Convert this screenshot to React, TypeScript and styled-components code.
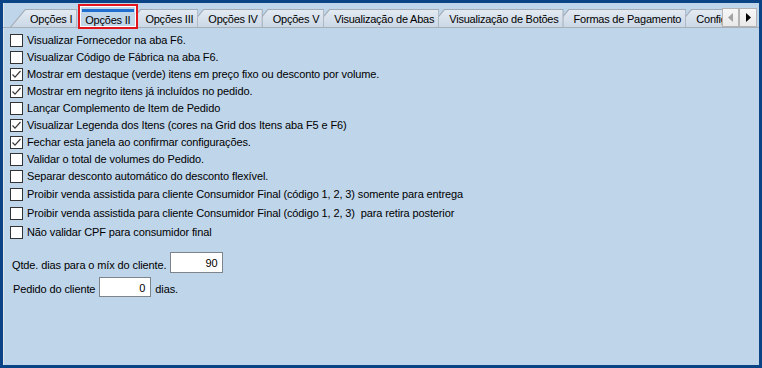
import React from "react";
import styled, { createGlobalStyle } from "styled-components";

const GlobalStyle = createGlobalStyle`
  html, body { margin: 0; padding: 0; background: #ffffff; }
  body { font-family: "Liberation Sans", Arial, sans-serif; }
`;

const Frame = styled.div`
  width: 762px;
  height: 368px;
  box-sizing: border-box;
  border: 3px solid #0a4487;
  background: #bfd5ea;
  box-shadow: inset 1px 0 0 #e2e5ea;
  display: flex;
  flex-direction: column;
  overflow: hidden;
  font-family: "Liberation Sans", Arial, sans-serif;
  font-size: 11px;
  letter-spacing: -0.12px;
  color: #000;
`;

const Header = styled.div`
  flex: none;
  height: 26px;
  display: flex;
  background: linear-gradient(
    to bottom,
    transparent 24px,
    #a7afb8 24px,
    #a7afb8 25px,
    transparent 25px
  );
`;

const TabList = styled.div`
  flex: 1;
  min-width: 0;
  overflow: hidden;
  display: flex;
  align-items: flex-start;
  padding: 6px 0 0 7px;
  letter-spacing: -0.22px;
`;

const Tab = styled.div<{ $z: number }>`
  position: relative;
  z-index: ${(p) => p.$z};
  flex: none;
  height: 18px;
  box-sizing: border-box;
  margin-left: -10px;
  padding: 2px 5px 0 20px;
  display: flex;
  align-items: center;
  white-space: nowrap;
  background: #a3acb6;
  clip-path: polygon(0 100%, 15px 0, 100% 0, 100% 100%);

  &:first-child {
    margin-left: 0;
  }

  &::before {
    content: "";
    position: absolute;
    inset: 0;
    z-index: -1;
    background: linear-gradient(#e4ebf3, #cbd8e6);
    clip-path: polygon(1.4px 100%, 15.6px 1px, calc(100% - 1px) 1px, calc(100% - 1px) 100%);
  }
`;

const ActiveTab = styled.div`
  position: relative;
  z-index: 50;
  flex: none;
  height: 25px;
  box-sizing: border-box;
  margin: -5px -3px 0 1px;
  padding: 6px 6px 0 5px;
  border: 2px solid #e3151c;
  box-shadow: inset 0 0 0 1px #ffffff;
  background:
    linear-gradient(#1f6fd0, #1f6fd0) 2px 3px / calc(100% - 4px) 3px no-repeat,
    #c2d6ea;
  display: flex;
  align-items: center;
  white-space: nowrap;
`;

const Scroller = styled.div`
  flex: none;
  display: flex;
  margin: 5px 2px 0 0;
`;

const ScrollButton = styled.div<{ $w: number }>`
  width: ${(p) => p.$w}px;
  height: 19px;
  box-sizing: border-box;
  border: 1px solid #b4b4b4;
  background: linear-gradient(#f7f7f7, #e9e9e9);
  display: flex;
  align-items: center;
  justify-content: center;
`;

const Body = styled.div`
  display: flex;
  flex-direction: column;
  padding: 2.5px 0 0 7px;
`;

const Row = styled.div<{ $tall?: boolean }>`
  display: flex;
  align-items: center;
  gap: 4px;
  height: ${(p) => (p.$tall ? 19 : 17)}px;
  white-space: pre;
`;

const Box = styled.span`
  flex: none;
  width: 13px;
  height: 13px;
  box-sizing: border-box;
  border: 1px solid #333333;
  background: #ffffff;
  display: flex;
  align-items: center;
  justify-content: center;
`;

const Fields = styled.div`
  display: flex;
  flex-direction: column;
  gap: 4px;
  margin-top: 10.5px;
  padding-left: 2px;
`;

const FieldRow = styled.div<{ $indent?: number }>`
  display: flex;
  align-items: center;
  gap: 4px;
  padding-left: ${(p) => p.$indent ?? 0}px;
`;

const FieldLabel = styled.span`
  padding-top: 4px;
  white-space: nowrap;
`;

const NumberInput = styled.div<{ $w: number; $h: number }>`
  width: ${(p) => p.$w}px;
  height: ${(p) => p.$h}px;
  box-sizing: border-box;
  border: 1px solid #7e848c;
  background: #ffffff;
  display: flex;
  align-items: center;
  justify-content: flex-end;
  padding: 1px 5px 0 0;
`;

const Check = () => (
  <svg width="11" height="11" viewBox="0 0 11 11">
    <polyline points="1.5,5.5 4,8.2 9.5,2" fill="none" stroke="#3a3a3a" strokeWidth="1.2" />
  </svg>
);

const tabs = [
  "Opções I",
  "Opções II",
  "Opções III",
  "Opções IV",
  "Opções V",
  "Visualização de Abas",
  "Visualização de Botões",
  "Formas de Pagamento",
  "Configurações",
];

const options: { label: string; checked: boolean; tall?: boolean }[] = [
  { label: "Visualizar Fornecedor na aba F6.", checked: false },
  { label: "Visualizar Código de Fábrica na aba F6.", checked: false },
  { label: "Mostrar em destaque (verde) itens em preço fixo ou desconto por volume.", checked: true },
  { label: "Mostrar em negrito itens já incluídos no pedido.", checked: true },
  { label: "Lançar Complemento de Item de Pedido", checked: false },
  { label: "Visualizar Legenda dos Itens (cores na Grid dos Itens aba F5 e F6)", checked: true },
  { label: "Fechar esta janela ao confirmar configurações.", checked: true },
  { label: "Validar o total de volumes do Pedido.", checked: false },
  { label: "Separar desconto automático do desconto flexível.", checked: false },
  { label: "Proibir venda assistida para cliente Consumidor Final (código 1, 2, 3) somente para entrega", checked: false, tall: true },
  { label: "Proibir venda assistida para cliente Consumidor Final (código 1, 2, 3)  para retira posterior", checked: false, tall: true },
  { label: "Não validar CPF para consumidor final", checked: false, tall: true },
];

export default function App() {
  return (
    <>
      <GlobalStyle />
      <Frame>
        <Header>
          <TabList>
            {tabs.map((t, i) =>
              i === 1 ? (
                <ActiveTab key={t}>{t}</ActiveTab>
              ) : (
                <Tab key={t} $z={30 - i}>
                  {t}
                </Tab>
              )
            )}
          </TabList>
          <Scroller>
            <ScrollButton $w={17}>
              <svg width="5" height="9" viewBox="0 0 5 9">
                <polygon points="5,0 0,4.5 5,9" fill="#a3a3a3" />
              </svg>
            </ScrollButton>
            <ScrollButton $w={18}>
              <svg width="5" height="9" viewBox="0 0 5 9">
                <polygon points="0,0 5,4.5 0,9" fill="#000000" />
              </svg>
            </ScrollButton>
          </Scroller>
        </Header>
        <Body>
          {options.map((o) => (
            <Row key={o.label} $tall={o.tall}>
              <Box>{o.checked && <Check />}</Box>
              <span>{o.label}</span>
            </Row>
          ))}
          <Fields>
            <FieldRow>
              <FieldLabel>Qtde. dias para o míx do cliente.</FieldLabel>
              <NumberInput $w={53} $h={21}>90</NumberInput>
            </FieldRow>
            <FieldRow $indent={1}>
              <FieldLabel>Pedido do cliente</FieldLabel>
              <NumberInput $w={52} $h={20}>0</NumberInput>
              <FieldLabel>dias.</FieldLabel>
            </FieldRow>
          </Fields>
        </Body>
      </Frame>
    </>
  );
}
